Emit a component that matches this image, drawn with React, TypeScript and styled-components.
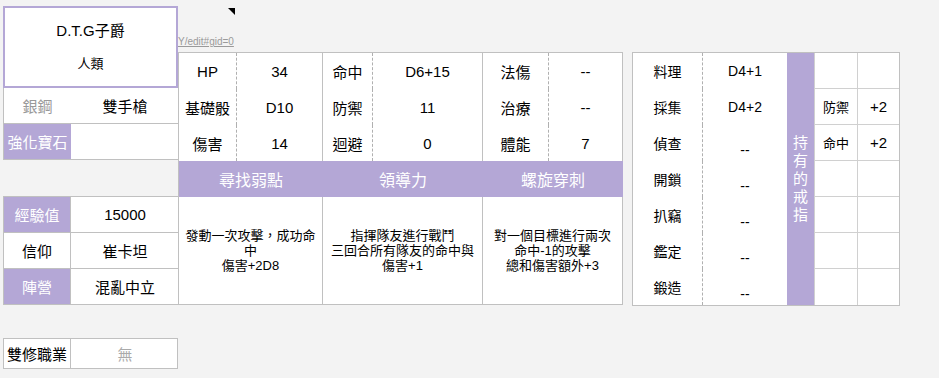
import styled, { createGlobalStyle } from "styled-components";

const GRID = "#c0c0c0";
const LIGHT = "#d0d0d0";
const PURPLE = "#b4a7d6";

const GlobalStyle = createGlobalStyle`
  html, body {
    margin: 0;
    padding: 0;
    background: #f3f3f3;
  }
  body {
    font-family: "Liberation Sans", "Noto Sans CJK TC", sans-serif;
    color: #000;
  }
  * {
    box-sizing: border-box;
  }
`;

const Sheet = styled.div`
  display: flex;
  align-items: flex-start;
  padding: 6px 0 0 3px;
  height: 378px;
`;

/* ---------- left column ---------- */

const LeftColumn = styled.div`
  width: 175px;
  display: flex;
  flex-direction: column;
`;

const NameCard = styled.div`
  height: 82px;
  border: 2px solid ${PURPLE};
  background: #fff;
  display: flex;
  flex-direction: column;
  align-items: center;
  justify-content: center;
  gap: 16px;
`;

const NameTitle = styled.div`
  font-size: 15px;
  line-height: 18px;
`;

const NameSub = styled.div`
  font-size: 13px;
  line-height: 16px;
`;

const InfoRow = styled.div<{ $top?: boolean; $right?: boolean; $h?: number }>`
  display: grid;
  grid-template-columns: 67px 108px;
  height: ${(p) => p.$h ?? 36}px;
  background: #fff;
  border-left: 1px solid ${GRID};
  border-bottom: 1px solid ${GRID};
  border-top: ${(p) => (p.$top ? `1px solid ${GRID}` : "none")};
  border-right: ${(p) => (p.$right ? `1px solid ${GRID}` : "none")};
`;

const InfoLabel = styled.div<{ $tone?: "purple" | "muted"; $divider?: boolean }>`
  display: flex;
  align-items: center;
  justify-content: center;
  font-size: 15px;
  white-space: nowrap;
  background: ${(p) => (p.$tone === "purple" ? PURPLE : "#fff")};
  color: ${(p) => (p.$tone === "purple" ? "#fff" : p.$tone === "muted" ? "#999" : "#000")};
  border-right: ${(p) => (p.$divider ? `1px solid ${GRID}` : "none")};
`;

const InfoValue = styled.div<{ $muted?: boolean }>`
  display: flex;
  align-items: center;
  justify-content: center;
  font-size: 15px;
  color: ${(p) => (p.$muted ? "#aaa" : "#000")};
`;

const Spacer = styled.div<{ $h: number }>`
  height: ${(p) => p.$h}px;
`;

/* ---------- middle: stats + skills ---------- */

const MiddleColumn = styled.div`
  width: 445px;
  display: flex;
  flex-direction: column;
`;

const TopStrip = styled.div`
  height: 46px;
  display: flex;
`;

const CommentCell = styled.div`
  width: 58px;
  display: flex;
  flex-direction: column;
  justify-content: space-between;
  align-items: flex-end;
  padding: 2px 1px 4px 0;
`;

const CommentMark = styled.div`
  width: 0;
  height: 0;
  border-top: 7px solid #000;
  border-left: 7px solid transparent;
`;

const SheetLink = styled.a`
  align-self: flex-start;
  font-size: 10px;
  line-height: 12px;
  color: #9a9a9a;
  text-decoration: underline;
  white-space: nowrap;
`;

const StatsGrid = styled.div`
  display: grid;
  grid-template-columns: 58px 86px 50px 110px 66px 74px;
  grid-template-rows: repeat(4, 36px) 108px;
  border-left: 1px solid ${GRID};
  border-top: 1px solid ${GRID};
  background: #fff;
`;

const StatLabel = styled.div`
  display: flex;
  align-items: center;
  justify-content: center;
  font-size: 15px;
  border-right: 1px dashed #b0b0b0;
`;

const StatValue = styled.div`
  display: flex;
  align-items: center;
  justify-content: center;
  font-size: 15px;
  border-right: 1px solid ${GRID};
`;

const SkillHeader = styled.div`
  grid-column: span 2;
  display: flex;
  align-items: center;
  justify-content: center;
  background: ${PURPLE};
  color: #fff;
  font-size: 16px;
`;

const SkillDesc = styled.div`
  grid-column: span 2;
  display: flex;
  align-items: center;
  justify-content: center;
  text-align: center;
  padding: 0 2px;
  font-size: 13px;
  line-height: 15px;
  border-right: 1px solid ${GRID};
  border-bottom: 1px solid ${GRID};
`;

/* ---------- right: life skills + rings ---------- */

const RightPanel = styled.div`
  margin: 46px 0 0 9px;
  display: grid;
  grid-template-columns: 70px 84px 27px 44px 41px;
  grid-template-rows: repeat(7, 36px);
  border: 1px solid ${GRID};
  background: #fff;
`;

const LifeLabel = styled.div`
  grid-column: 1;
  display: flex;
  align-items: center;
  justify-content: center;
  font-size: 14px;
  border-right: 1px dashed #b0b0b0;
`;

const LifeValue = styled.div<{ $sink?: boolean }>`
  grid-column: 2;
  display: flex;
  align-items: ${(p) => (p.$sink ? "flex-end" : "center")};
  justify-content: center;
  padding-bottom: ${(p) => (p.$sink ? "3px" : "0")};
  font-size: 14px;
`;

const RingTitle = styled.div`
  grid-column: 3;
  grid-row: 1 / -1;
  display: flex;
  align-items: center;
  justify-content: center;
  background: ${PURPLE};
  color: #fff;
  font-size: 15px;
  line-height: 18px;

  span {
    width: 1em;
    word-break: break-all;
    text-align: center;
  }
`;

const RingName = styled.div<{ $last?: boolean }>`
  grid-column: 4;
  display: flex;
  align-items: center;
  justify-content: center;
  font-size: 13px;
  border-left: 1px solid ${LIGHT};
  border-right: 1px solid ${LIGHT};
  border-bottom: ${(p) => (p.$last ? "none" : `1px solid ${LIGHT}`)};
`;

const RingBonus = styled.div<{ $last?: boolean }>`
  grid-column: 5;
  display: flex;
  align-items: center;
  justify-content: center;
  font-size: 15px;
  border-bottom: ${(p) => (p.$last ? "none" : `1px solid ${LIGHT}`)};
`;

const stats = [
  ["HP", "34", "命中", "D6+15", "法傷", "--"],
  ["基礎骰", "D10", "防禦", "11", "治療", "--"],
  ["傷害", "14", "迴避", "0", "體能", "7"],
];

const lifeSkills = [
  ["料理", "D4+1"],
  ["採集", "D4+2"],
  ["偵查", "--"],
  ["開鎖", "--"],
  ["扒竊", "--"],
  ["鑑定", "--"],
  ["鍛造", "--"],
];

const rings = [
  ["", ""],
  ["防禦", "+2"],
  ["命中", "+2"],
  ["", ""],
  ["", ""],
  ["", ""],
  ["", ""],
];

export default function App() {
  return (
    <>
      <GlobalStyle />
      <Sheet>
        <LeftColumn>
          <NameCard>
            <NameTitle>D.T.G子爵</NameTitle>
            <NameSub>人類</NameSub>
          </NameCard>
          <InfoRow>
            <InfoLabel $tone="muted">銀鋼</InfoLabel>
            <InfoValue>雙手槍</InfoValue>
          </InfoRow>
          <InfoRow>
            <InfoLabel $tone="purple">強化寶石</InfoLabel>
            <InfoValue />
          </InfoRow>
          <Spacer $h={36} />
          <InfoRow $top $h={37}>
            <InfoLabel $tone="purple" $divider>經驗值</InfoLabel>
            <InfoValue>15000</InfoValue>
          </InfoRow>
          <InfoRow>
            <InfoLabel $divider>信仰</InfoLabel>
            <InfoValue>崔卡坦</InfoValue>
          </InfoRow>
          <InfoRow>
            <InfoLabel $tone="purple" $divider>陣營</InfoLabel>
            <InfoValue>混亂中立</InfoValue>
          </InfoRow>
          <Spacer $h={33} />
          <InfoRow $top $right $h={31}>
            <InfoLabel $divider>雙修職業</InfoLabel>
            <InfoValue $muted>無</InfoValue>
          </InfoRow>
        </LeftColumn>

        <MiddleColumn>
          <TopStrip>
            <CommentCell>
              <CommentMark />
              <SheetLink>Y/edit#gid=0</SheetLink>
            </CommentCell>
          </TopStrip>
          <StatsGrid>
            {stats.map((row, i) =>
              row.map((text, j) =>
                j % 2 === 0 ? (
                  <StatLabel key={`${i}-${j}`}>{text}</StatLabel>
                ) : (
                  <StatValue key={`${i}-${j}`}>{text}</StatValue>
                )
              )
            )}
            <SkillHeader>尋找弱點</SkillHeader>
            <SkillHeader>領導力</SkillHeader>
            <SkillHeader>螺旋穿刺</SkillHeader>
            <SkillDesc>
              <div>
                發動一次攻擊，成功命中
                <br />
                傷害+2D8
              </div>
            </SkillDesc>
            <SkillDesc>
              <div>
                指揮隊友進行戰鬥
                <br />
                三回合所有隊友的命中與
                <br />
                傷害+1
              </div>
            </SkillDesc>
            <SkillDesc>
              <div>
                對一個目標進行兩次
                <br />
                命中-1的攻擊
                <br />
                總和傷害額外+3
              </div>
            </SkillDesc>
          </StatsGrid>
        </MiddleColumn>

        <RightPanel>
          <RingTitle>
            <span>持有的戒指</span>
          </RingTitle>
          {lifeSkills.map(([name, value], i) => {
            const last = i === lifeSkills.length - 1;
            return [
              <LifeLabel key={`l${i}`}>{name}</LifeLabel>,
              <LifeValue key={`v${i}`} $sink={value === "--"}>
                {value}
              </LifeValue>,
              <RingName key={`r${i}`} $last={last}>
                {rings[i][0]}
              </RingName>,
              <RingBonus key={`b${i}`} $last={last}>
                {rings[i][1]}
              </RingBonus>,
            ];
          })}
        </RightPanel>
      </Sheet>
    </>
  );
}
